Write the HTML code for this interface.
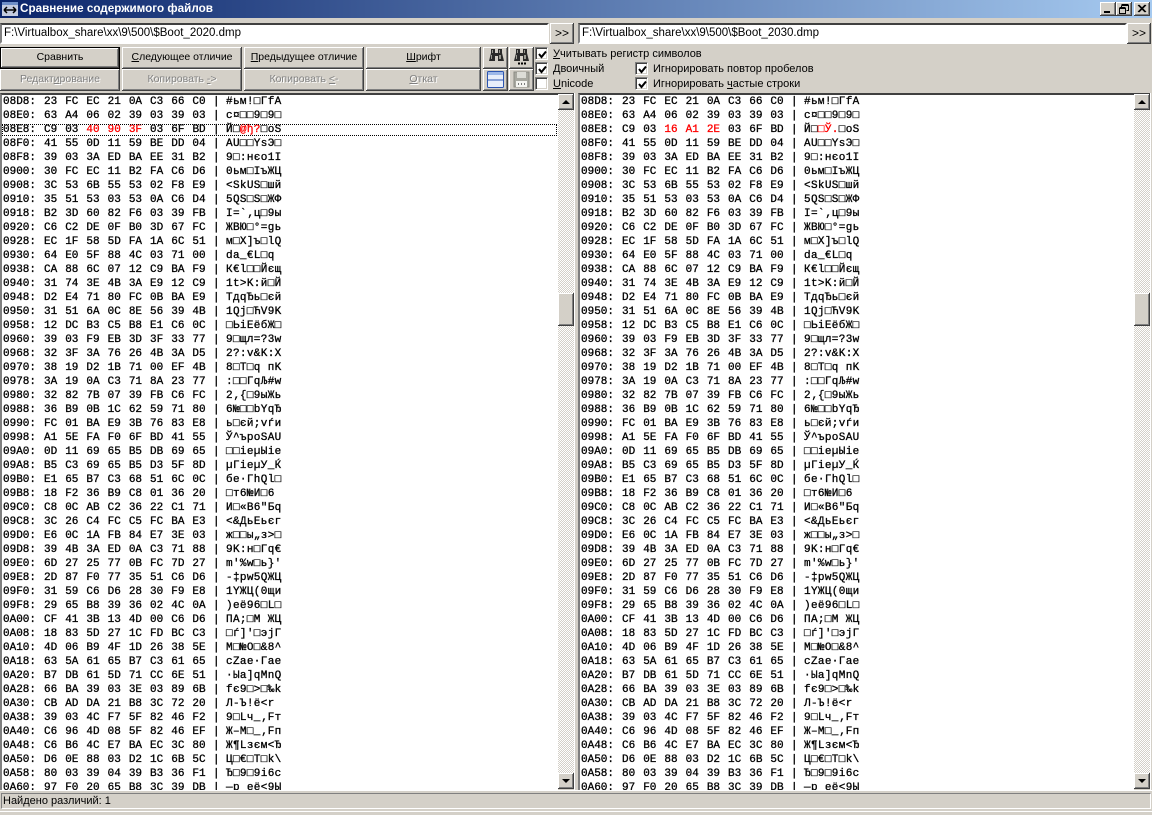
<!DOCTYPE html>
<html lang="ru"><head><meta charset="utf-8"><title>Сравнение содержимого файлов</title>
<style>
html,body{margin:0;padding:0;width:1152px;height:815px;overflow:hidden;background:#d4d0c8;font:11px "Liberation Sans","Noto Sans CJK SC",sans-serif;color:#000}
div,span{box-sizing:border-box}
.abs,.btn,.inp,.cb,.lbl,.pane,.sb,.arr,.thumb,.wb{position:absolute}
#title{position:absolute;left:0;top:0;width:1152px;height:18px;background:linear-gradient(90deg,#0a246a,#a6caf0);color:#fff;font-weight:bold;font-size:11.7px;line-height:18px;padding-left:20px;white-space:nowrap}
.wb{top:2px;width:16px;height:14px;background:#d4d0c8;box-shadow:inset -1px -1px 0 #404040,inset 1px 1px 0 #fff,inset -2px -2px 0 #808080}
.inp{top:23px;height:21px;background:#fff;border:2px solid;border-color:#404040 #fff #fff #808080;font-size:11.5px;line-height:17px;padding-left:2px;white-space:nowrap}
.btn{height:22px;background:#d4d0c8;text-align:center;line-height:20px;white-space:nowrap;box-shadow:inset -1px -1px 0 #404040,inset 1px 1px 0 #fff,inset -2px -2px 0 #808080;font-size:10.5px}
.btn.def{box-shadow:inset 0 0 0 1px #000,inset -2px -2px 0 #404040,inset 2px 2px 0 #fff,inset -3px -3px 0 #808080}
.dis{color:#808080;text-shadow:1px 1px 0 #fff}
.cb{width:13px;height:13px;background:#fff;border:1px solid;border-color:#808080 #fff #fff #808080;box-shadow:inset 1px 1px 0 #404040,inset -1px -1px 0 #d4d0c8}
.cb svg{position:absolute;left:1px;top:1px}
.lbl{white-space:nowrap;font-size:11px;line-height:14px}
.pane{top:93px;height:697px;background:#fff;overflow:hidden;border-top:2px solid #404040;border-left:2px solid #808080;font:11px/14px "Liberation Mono",monospace;font-weight:normal;-webkit-text-stroke:.3px #000}
.pane p{position:relative;margin:0;height:14px;white-space:pre;left:1px}
.pane i{font-style:normal;position:absolute;left:41px;top:0;word-spacing:1.4px}
.pane u{text-decoration:none;position:absolute;left:210px;top:0}
.pane b{font-weight:normal;position:absolute;left:223px;top:0;letter-spacing:.35px}
.r{color:#f00;-webkit-text-stroke:.3px #f00}
.pane p.sel{left:0;padding-left:1px}
.pane p.sel::after{content:"";position:absolute;left:0;top:1px;right:1px;height:10px;border:1px dotted #000}
.pane p.sel i{left:42px}.pane p.sel u{left:211px}.pane p.sel b{left:224px}
.sb{top:94px;width:16px;height:695px;background-image:conic-gradient(#d4d0c8 25%,#fff 0 50%,#d4d0c8 0 75%,#fff 0);background-size:2px 2px}
.arr{left:0;width:16px;height:16px;background:#d4d0c8;box-shadow:inset -1px -1px 0 #404040,inset 1px 1px 0 #fff,inset -2px -2px 0 #808080}
.thumb{left:0;top:199px;width:16px;height:33px;background:#d4d0c8;box-shadow:inset -1px -1px 0 #404040,inset 1px 1px 0 #fff,inset -2px -2px 0 #808080}
.tri{position:absolute;left:4px;width:0;height:0;border-left:4px solid transparent;border-right:4px solid transparent}
#st{position:absolute;left:1px;top:793px;width:1150px;height:16px;background:#d4d0c8;border:1px solid;border-color:#808080 #fff #fff #808080;font-size:11px;line-height:15px;padding-left:1px;white-space:nowrap}
</style></head><body>
<div id="title">Сравнение содержимого файлов</div>
<svg class="abs" style="left:2px;top:2px" width="16" height="14" viewBox="0 0 16 14"><rect width="16" height="14" fill="#c4cce0"/><rect x="0" y="0" width="16" height="3" fill="#6f8fc8"/><path d="M2 8h12M2 8l3-3M2 8l3 3M14 8l-3-3M14 8l-3 3" stroke="#000" stroke-width="1.5" fill="none"/></svg>
<div class="wb" style="left:1100px"><svg width="16" height="14"><rect x="4" y="9" width="6" height="2" fill="#000"/></svg></div>
<div class="wb" style="left:1116px"><svg width="16" height="14"><path d="M5.5 3.5h7v5h-2M5.5 3.5v2M5.5 2.5h7" stroke="#000" fill="none"/><path d="M3.5 6.5h6v5h-6z M3.5 5.5h6" stroke="#000" fill="none"/></svg></div>
<div class="wb" style="left:1134px"><svg width="16" height="14"><path d="M4 3l7 7M5 3l7 7M11 3l-7 7M12 3l-7 7" stroke="#000" fill="none"/></svg></div>

<div class="inp" style="left:0;width:549px">F:\Virtualbox_share\xx\9\500\$Boot_2020.dmp</div>
<div class="btn" style="left:550px;top:23px;width:24px;height:21px;font-size:12px">&gt;&gt;</div>
<div class="inp" style="left:578px;width:549px">F:\Virtualbox_share\xx\9\500\$Boot_2030.dmp</div>
<div class="btn" style="left:1127px;top:23px;width:24px;height:21px;font-size:12px">&gt;&gt;</div>

<div class="btn def" style="left:0;top:47px;width:120px">Сравнить</div>
<div class="btn" style="left:122px;top:47px;width:120px"><span style="text-decoration:underline">С</span>ледующее отличие</div>
<div class="btn" style="left:244px;top:47px;width:120px"><span style="text-decoration:underline">П</span>редыдущее отличие</div>
<div class="btn" style="left:366px;top:47px;width:115px"><span style="text-decoration:underline">Ш</span>рифт</div>
<div class="btn" style="left:483px;top:47px;width:25px"></div>
<div class="btn" style="left:509px;top:47px;width:25px"></div>
<svg class="abs" style="left:489px;top:48px" width="15" height="14" viewBox="0 0 15 14"><path d="M2 1h4v4h3V1h4v4l2 8H9V8H6v5H0l2-8z" fill="#2a2a2a"/><path d="M3 2h1v3H3zM10 2h1v3h-1zM2 7h1v4H2zM10 7h2v4h-2z" fill="#9a9a92"/></svg>
<svg class="abs" style="left:514px;top:48px" width="15" height="18" viewBox="0 0 15 18"><path d="M2 1h4v4h3V1h4v4l2 8H9V8H6v5H0l2-8z" fill="#2a2a2a"/><path d="M3 2h1v3H3zM10 2h1v3h-1zM2 7h1v4H2zM10 7h2v4h-2z" fill="#9a9a92"/><path d="M4 14.500h2v2H4zM7 14.500h2v2H7zM10 14.500h2v2h-2z" fill="#000"/></svg>

<div class="btn dis" style="left:0;top:69px;width:120px">Редакт<span style="text-decoration:underline">и</span>рование</div>
<div class="btn dis" style="left:122px;top:69px;width:120px">Копировать <span style="text-decoration:underline">-</span>&gt;</div>
<div class="btn dis" style="left:244px;top:69px;width:120px">Копировать <span style="text-decoration:underline">&lt;</span>-</div>
<div class="btn dis" style="left:366px;top:69px;width:115px"><span style="text-decoration:underline">О</span>ткат</div>
<div class="btn" style="left:483px;top:69px;width:25px"></div>
<div class="btn" style="left:509px;top:69px;width:25px"></div>
<svg class="abs" style="left:487px;top:71px" width="17" height="17" viewBox="0 0 17 17"><rect x=".5" y=".5" width="16" height="16" rx="1" fill="#e8eefa" stroke="#2c55b0"/><rect x="1" y="1" width="15" height="3" fill="#9db8e8"/><path d="M1 9h15" stroke="#2c55b0"/></svg>
<svg class="abs" style="left:513px;top:71px" width="17" height="17" viewBox="0 0 17 17"><path d="M1 1h15v15H1z" fill="#a8a8a0" stroke="#8c8c84"/><rect x="4" y="1" width="9" height="6" fill="#dcdcd6"/><rect x="3" y="10" width="11" height="6" fill="#f4f4f0"/><path d="M5 13h1M8 13h1M11 13h1" stroke="#555" stroke-width="1.5"/></svg>

<div class="cb" style="left:535px;top:47px"><svg width="11" height="11"><path d="M2 5l2.5 3L9 2.5" stroke="#000" stroke-width="2" fill="none"/></svg></div>
<div class="cb" style="left:535px;top:62px"><svg width="11" height="11"><path d="M2 5l2.5 3L9 2.5" stroke="#000" stroke-width="2" fill="none"/></svg></div>
<div class="cb" style="left:535px;top:77px"></div>
<div class="cb" style="left:635px;top:62px"><svg width="11" height="11"><path d="M2 5l2.5 3L9 2.5" stroke="#000" stroke-width="2" fill="none"/></svg></div>
<div class="cb" style="left:635px;top:77px"><svg width="11" height="11"><path d="M2 5l2.5 3L9 2.5" stroke="#000" stroke-width="2" fill="none"/></svg></div>
<div class="lbl" style="left:553px;top:47px"><span style="text-decoration:underline">У</span>читывать регистр символов</div>
<div class="lbl" style="left:553px;top:62px"><span style="text-decoration:underline">Д</span>воичный</div>
<div class="lbl" style="left:553px;top:77px"><span style="text-decoration:underline">U</span>nicode</div>
<div class="lbl" style="left:653px;top:62px">Игнорировать повтор пробелов</div>
<div class="lbl" style="left:653px;top:77px">Игнорировать <span style="text-decoration:underline">ч</span>астые строки</div>

<div class="abs" style="left:0;top:93px;width:575px;height:1px;background:#404040"></div>
<div class="abs" style="left:574px;top:93px;width:1px;height:697px;background:#fff"></div>
<div class="abs" style="left:578px;top:93px;width:573px;height:1px;background:#404040"></div>
<div class="abs" style="left:1150px;top:93px;width:1px;height:697px;background:#fff"></div>

<div class="pane" style="left:0;width:558px">
<p>08D8:<i>23 FC EC 21 0A C3 66 C0</i><u>|</u><b>#ьм!□ГfА</b></p>
<p>08E0:<i>63 A4 06 02 39 03 39 03</i><u>|</u><b>c¤□□9□9□</b></p>
<p class="sel">08E8:<i>C9 03 <span class="r">40 90 3F</span> 03 6F BD</i><u>|</u><b>Й□<span class="r">@ђ?</span>□oЅ</b></p>
<p>08F0:<i>41 55 0D 11 59 BE DD 04</i><u>|</u><b>AU□□YѕЭ□</b></p>
<p>08F8:<i>39 03 3A ED BA EE 31 B2</i><u>|</u><b>9□:нєо1І</b></p>
<p>0900:<i>30 FC EC 11 B2 FA C6 D6</i><u>|</u><b>0ьм□ІъЖЦ</b></p>
<p>0908:<i>3C 53 6B 55 53 02 F8 E9</i><u>|</u><b>&lt;SkUS□шй</b></p>
<p>0910:<i>35 51 53 03 53 0A C6 D4</i><u>|</u><b>5QS□S□ЖФ</b></p>
<p>0918:<i>B2 3D 60 82 F6 03 39 FB</i><u>|</u><b>І=`‚ц□9ы</b></p>
<p>0920:<i>C6 C2 DE 0F B0 3D 67 FC</i><u>|</u><b>ЖВЮ□°=gь</b></p>
<p>0928:<i>EC 1F 58 5D FA 1A 6C 51</i><u>|</u><b>м□X]ъ□lQ</b></p>
<p>0930:<i>64 E0 5F 88 4C 03 71 00</i><u>|</u><b>dа_€L□q</b></p>
<p>0938:<i>CA 88 6C 07 12 C9 BA F9</i><u>|</u><b>К€l□□Йєщ</b></p>
<p>0940:<i>31 74 3E 4B 3A E9 12 C9</i><u>|</u><b>1t&gt;K:й□Й</b></p>
<p>0948:<i>D2 E4 71 80 FC 0B BA E9</i><u>|</u><b>ТдqЂь□єй</b></p>
<p>0950:<i>31 51 6A 0C 8E 56 39 4B</i><u>|</u><b>1Qj□ЋV9K</b></p>
<p>0958:<i>12 DC B3 C5 B8 E1 C6 0C</i><u>|</u><b>□ЬіЕёбЖ□</b></p>
<p>0960:<i>39 03 F9 EB 3D 3F 33 77</i><u>|</u><b>9□щл=?3w</b></p>
<p>0968:<i>32 3F 3A 76 26 4B 3A D5</i><u>|</u><b>2?:v&amp;K:Х</b></p>
<p>0970:<i>38 19 D2 1B 71 00 EF 4B</i><u>|</u><b>8□Т□q пK</b></p>
<p>0978:<i>3A 19 0A C3 71 8A 23 77</i><u>|</u><b>:□□ГqЉ#w</b></p>
<p>0980:<i>32 82 7B 07 39 FB C6 FC</i><u>|</u><b>2‚{□9ыЖь</b></p>
<p>0988:<i>36 B9 0B 1C 62 59 71 80</i><u>|</u><b>6№□□bYqЂ</b></p>
<p>0990:<i>FC 01 BA E9 3B 76 83 E8</i><u>|</u><b>ь□єй;vѓи</b></p>
<p>0998:<i>A1 5E FA F0 6F BD 41 55</i><u>|</u><b>Ў^ърoЅAU</b></p>
<p>09A0:<i>0D 11 69 65 B5 DB 69 65</i><u>|</u><b>□□ieµЫie</b></p>
<p>09A8:<i>B5 C3 69 65 B5 D3 5F 8D</i><u>|</u><b>µГieµУ_Ќ</b></p>
<p>09B0:<i>E1 65 B7 C3 68 51 6C 0C</i><u>|</u><b>бe·ГhQl□</b></p>
<p>09B8:<i>18 F2 36 B9 C8 01 36 20</i><u>|</u><b>□т6№И□6</b></p>
<p>09C0:<i>C8 0C AB C2 36 22 C1 71</i><u>|</u><b>И□«В6"Бq</b></p>
<p>09C8:<i>3C 26 C4 FC C5 FC BA E3</i><u>|</u><b>&lt;&amp;ДьЕьєг</b></p>
<p>09D0:<i>E6 0C 1A FB 84 E7 3E 03</i><u>|</u><b>ж□□ы„з&gt;□</b></p>
<p>09D8:<i>39 4B 3A ED 0A C3 71 88</i><u>|</u><b>9K:н□Гq€</b></p>
<p>09E0:<i>6D 27 25 77 0B FC 7D 27</i><u>|</u><b>m'%w□ь}'</b></p>
<p>09E8:<i>2D 87 F0 77 35 51 C6 D6</i><u>|</u><b>-‡рw5QЖЦ</b></p>
<p>09F0:<i>31 59 C6 D6 28 30 F9 E8</i><u>|</u><b>1YЖЦ(0щи</b></p>
<p>09F8:<i>29 65 B8 39 36 02 4C 0A</i><u>|</u><b>)eё96□L□</b></p>
<p>0A00:<i>CF 41 3B 13 4D 00 C6 D6</i><u>|</u><b>ПA;□M ЖЦ</b></p>
<p>0A08:<i>18 83 5D 27 1C FD BC C3</i><u>|</u><b>□ѓ]'□эјГ</b></p>
<p>0A10:<i>4D 06 B9 4F 1D 26 38 5E</i><u>|</u><b>M□№O□&amp;8^</b></p>
<p>0A18:<i>63 5A 61 65 B7 C3 61 65</i><u>|</u><b>cZae·Гae</b></p>
<p>0A20:<i>B7 DB 61 5D 71 CC 6E 51</i><u>|</u><b>·Ыa]qМnQ</b></p>
<p>0A28:<i>66 BA 39 03 3E 03 89 6B</i><u>|</u><b>fє9□&gt;□‰k</b></p>
<p>0A30:<i>CB AD DA 21 B8 3C 72 20</i><u>|</u><b>Л-Ъ!ё&lt;r</b></p>
<p>0A38:<i>39 03 4C F7 5F 82 46 F2</i><u>|</u><b>9□Lч_‚Fт</b></p>
<p>0A40:<i>C6 96 4D 08 5F 82 46 EF</i><u>|</u><b>Ж–M□_‚Fп</b></p>
<p>0A48:<i>C6 B6 4C E7 BA EC 3C 80</i><u>|</u><b>Ж¶Lзєм&lt;Ђ</b></p>
<p>0A50:<i>D6 0E 88 03 D2 1C 6B 5C</i><u>|</u><b>Ц□€□Т□k\</b></p>
<p>0A58:<i>80 03 39 04 39 B3 36 F1</i><u>|</u><b>Ђ□9□9і6с</b></p>
<p>0A60:<i>97 F0 20 65 B8 3C 39 DB</i><u>|</u><b>—р eё&lt;9Ы</b></p>
</div>
<div class="sb" style="left:558px"><div class="arr" style="top:0"><span class="tri" style="top:6px;border-bottom:4px solid #000"></span></div><div class="thumb"></div><div class="arr" style="bottom:0"><span class="tri" style="top:6px;border-top:4px solid #000"></span></div></div>

<div class="pane" style="left:578px;width:556px">
<p>08D8:<i>23 FC EC 21 0A C3 66 C0</i><u>|</u><b>#ьм!□ГfА</b></p>
<p>08E0:<i>63 A4 06 02 39 03 39 03</i><u>|</u><b>c¤□□9□9□</b></p>
<p>08E8:<i>C9 03 <span class="r">16 A1 2E</span> 03 6F BD</i><u>|</u><b>Й□<span class="r">□Ў.</span>□oЅ</b></p>
<p>08F0:<i>41 55 0D 11 59 BE DD 04</i><u>|</u><b>AU□□YѕЭ□</b></p>
<p>08F8:<i>39 03 3A ED BA EE 31 B2</i><u>|</u><b>9□:нєо1І</b></p>
<p>0900:<i>30 FC EC 11 B2 FA C6 D6</i><u>|</u><b>0ьм□ІъЖЦ</b></p>
<p>0908:<i>3C 53 6B 55 53 02 F8 E9</i><u>|</u><b>&lt;SkUS□шй</b></p>
<p>0910:<i>35 51 53 03 53 0A C6 D4</i><u>|</u><b>5QS□S□ЖФ</b></p>
<p>0918:<i>B2 3D 60 82 F6 03 39 FB</i><u>|</u><b>І=`‚ц□9ы</b></p>
<p>0920:<i>C6 C2 DE 0F B0 3D 67 FC</i><u>|</u><b>ЖВЮ□°=gь</b></p>
<p>0928:<i>EC 1F 58 5D FA 1A 6C 51</i><u>|</u><b>м□X]ъ□lQ</b></p>
<p>0930:<i>64 E0 5F 88 4C 03 71 00</i><u>|</u><b>dа_€L□q</b></p>
<p>0938:<i>CA 88 6C 07 12 C9 BA F9</i><u>|</u><b>К€l□□Йєщ</b></p>
<p>0940:<i>31 74 3E 4B 3A E9 12 C9</i><u>|</u><b>1t&gt;K:й□Й</b></p>
<p>0948:<i>D2 E4 71 80 FC 0B BA E9</i><u>|</u><b>ТдqЂь□єй</b></p>
<p>0950:<i>31 51 6A 0C 8E 56 39 4B</i><u>|</u><b>1Qj□ЋV9K</b></p>
<p>0958:<i>12 DC B3 C5 B8 E1 C6 0C</i><u>|</u><b>□ЬіЕёбЖ□</b></p>
<p>0960:<i>39 03 F9 EB 3D 3F 33 77</i><u>|</u><b>9□щл=?3w</b></p>
<p>0968:<i>32 3F 3A 76 26 4B 3A D5</i><u>|</u><b>2?:v&amp;K:Х</b></p>
<p>0970:<i>38 19 D2 1B 71 00 EF 4B</i><u>|</u><b>8□Т□q пK</b></p>
<p>0978:<i>3A 19 0A C3 71 8A 23 77</i><u>|</u><b>:□□ГqЉ#w</b></p>
<p>0980:<i>32 82 7B 07 39 FB C6 FC</i><u>|</u><b>2‚{□9ыЖь</b></p>
<p>0988:<i>36 B9 0B 1C 62 59 71 80</i><u>|</u><b>6№□□bYqЂ</b></p>
<p>0990:<i>FC 01 BA E9 3B 76 83 E8</i><u>|</u><b>ь□єй;vѓи</b></p>
<p>0998:<i>A1 5E FA F0 6F BD 41 55</i><u>|</u><b>Ў^ърoЅAU</b></p>
<p>09A0:<i>0D 11 69 65 B5 DB 69 65</i><u>|</u><b>□□ieµЫie</b></p>
<p>09A8:<i>B5 C3 69 65 B5 D3 5F 8D</i><u>|</u><b>µГieµУ_Ќ</b></p>
<p>09B0:<i>E1 65 B7 C3 68 51 6C 0C</i><u>|</u><b>бe·ГhQl□</b></p>
<p>09B8:<i>18 F2 36 B9 C8 01 36 20</i><u>|</u><b>□т6№И□6</b></p>
<p>09C0:<i>C8 0C AB C2 36 22 C1 71</i><u>|</u><b>И□«В6"Бq</b></p>
<p>09C8:<i>3C 26 C4 FC C5 FC BA E3</i><u>|</u><b>&lt;&amp;ДьЕьєг</b></p>
<p>09D0:<i>E6 0C 1A FB 84 E7 3E 03</i><u>|</u><b>ж□□ы„з&gt;□</b></p>
<p>09D8:<i>39 4B 3A ED 0A C3 71 88</i><u>|</u><b>9K:н□Гq€</b></p>
<p>09E0:<i>6D 27 25 77 0B FC 7D 27</i><u>|</u><b>m'%w□ь}'</b></p>
<p>09E8:<i>2D 87 F0 77 35 51 C6 D6</i><u>|</u><b>-‡рw5QЖЦ</b></p>
<p>09F0:<i>31 59 C6 D6 28 30 F9 E8</i><u>|</u><b>1YЖЦ(0щи</b></p>
<p>09F8:<i>29 65 B8 39 36 02 4C 0A</i><u>|</u><b>)eё96□L□</b></p>
<p>0A00:<i>CF 41 3B 13 4D 00 C6 D6</i><u>|</u><b>ПA;□M ЖЦ</b></p>
<p>0A08:<i>18 83 5D 27 1C FD BC C3</i><u>|</u><b>□ѓ]'□эјГ</b></p>
<p>0A10:<i>4D 06 B9 4F 1D 26 38 5E</i><u>|</u><b>M□№O□&amp;8^</b></p>
<p>0A18:<i>63 5A 61 65 B7 C3 61 65</i><u>|</u><b>cZae·Гae</b></p>
<p>0A20:<i>B7 DB 61 5D 71 CC 6E 51</i><u>|</u><b>·Ыa]qМnQ</b></p>
<p>0A28:<i>66 BA 39 03 3E 03 89 6B</i><u>|</u><b>fє9□&gt;□‰k</b></p>
<p>0A30:<i>CB AD DA 21 B8 3C 72 20</i><u>|</u><b>Л-Ъ!ё&lt;r</b></p>
<p>0A38:<i>39 03 4C F7 5F 82 46 F2</i><u>|</u><b>9□Lч_‚Fт</b></p>
<p>0A40:<i>C6 96 4D 08 5F 82 46 EF</i><u>|</u><b>Ж–M□_‚Fп</b></p>
<p>0A48:<i>C6 B6 4C E7 BA EC 3C 80</i><u>|</u><b>Ж¶Lзєм&lt;Ђ</b></p>
<p>0A50:<i>D6 0E 88 03 D2 1C 6B 5C</i><u>|</u><b>Ц□€□Т□k\</b></p>
<p>0A58:<i>80 03 39 04 39 B3 36 F1</i><u>|</u><b>Ђ□9□9і6с</b></p>
<p>0A60:<i>97 F0 20 65 B8 3C 39 DB</i><u>|</u><b>—р eё&lt;9Ы</b></p>
</div>
<div class="sb" style="left:1134px"><div class="arr" style="top:0"><span class="tri" style="top:6px;border-bottom:4px solid #000"></span></div><div class="thumb"></div><div class="arr" style="bottom:0"><span class="tri" style="top:6px;border-top:4px solid #000"></span></div></div>
<div class="abs" style="left:0;top:790px;width:1152px;height:1px;background:#fff"></div>
<div id="st">Найдено различий: 1</div>
<div class="abs" style="left:0;top:811px;width:1152px;height:1px;background:#fff"></div>
</body></html>
